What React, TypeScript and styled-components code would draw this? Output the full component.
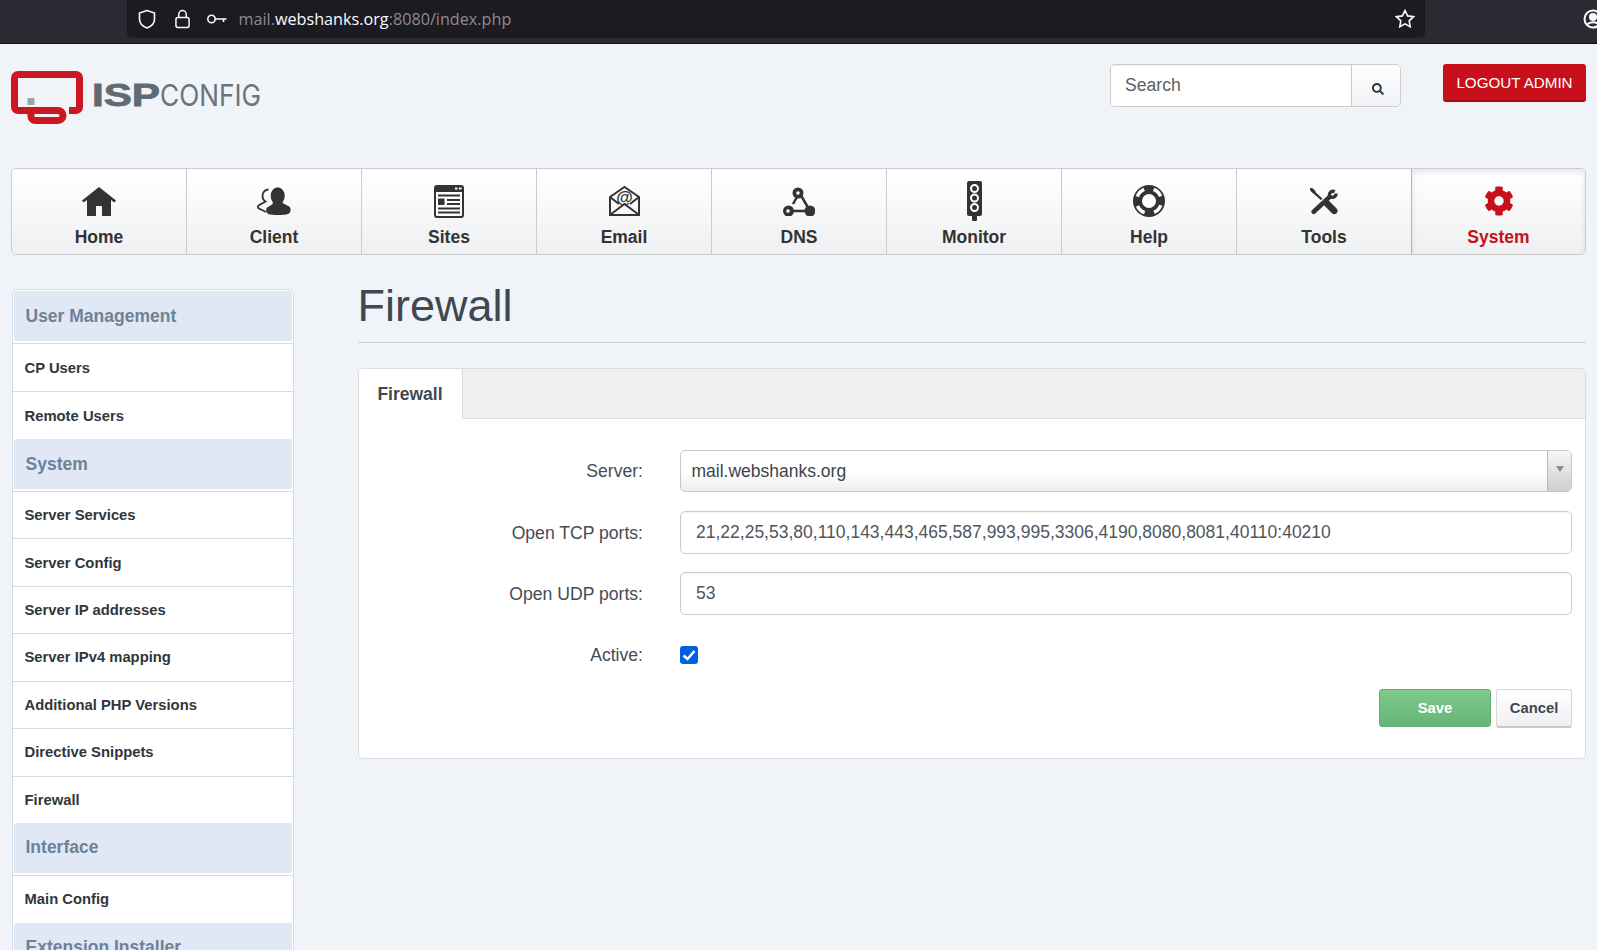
import styled, { createGlobalStyle } from 'styled-components';
import { FaCog, FaSearch } from 'react-icons/fa';

const GlobalStyle = createGlobalStyle`
  html, body {
    margin: 0;
    height: 950px;
    overflow: hidden;
    background: #f0f4f8;
    font-family: "Liberation Sans", Arial, sans-serif;
    color: #3b434b;
  }
  * { box-sizing: border-box; }
`;

const TopBar = styled.div`
  display: flex;
  height: 44px;
  background: #2b2a33;
  border-bottom: 1px solid #0b0b0e;
  padding-left: 127px;
  overflow: hidden;
`;

const UrlBox = styled.div`
  display: flex;
  flex: none;
  align-items: center;
  width: 1298px;
  height: 38px;
  padding: 0 10px 0 10px;
  background: #1c1b22;
  border-radius: 0 0 5px 5px;
`;

const UrlIcon = styled.svg`
  flex: none;
  margin-right: 17.5px;
  fill: none;
  stroke: #fbfbfe;
  stroke-width: 1.6;
`;

const UrlText = styled.span`
  margin-left: -6px;
  flex: 1;
  font-family: "Open Sans", sans-serif;
  font-size: 16.2px;
  color: #8c8c91;
`;

const UrlHost = styled.span`
  color: #fbfbfe;
`;

const StarIcon = styled.svg`
  flex: none;
  fill: none;
  stroke: #fbfbfe;
  stroke-width: 1.6;
`;

const ProfileIcon = styled.svg`
  flex: none;
  margin: 9px 0 0 158px;
  fill: none;
  stroke: #fbfbfe;
  stroke-width: 2;
`;

const Header = styled.header`
  display: flex;
  justify-content: space-between;
  align-items: flex-start;
  height: 124px;
  padding: 20px 11px 0;
`;

const LogoBox = styled.div`
  margin-top: 7px;

  svg {
    display: block;
  }
`;

const HeaderRight = styled.div`
  display: flex;
  align-items: flex-start;
  gap: 42px;
`;

const SearchGroup = styled.div`
  display: flex;
  width: 291px;
  height: 43px;
  border: 1px solid #cccccc;
  border-radius: 5px;
  overflow: hidden;
`;

const SearchInput = styled.input`
  flex: 1;
  min-width: 0;
  border: 0;
  outline: 0;
  padding: 0 14px;
  font: 17.6px "Liberation Sans", Arial, sans-serif;
  color: #555;
  background: #fff;
  box-shadow: inset 0 1px 1px rgba(0, 0, 0, 0.07);

  &::placeholder {
    color: #5a5f65;
    opacity: 1;
  }
`;

const SearchButton = styled.button`
  display: flex;
  align-items: center;
  justify-content: center;
  width: 49px;
  padding: 6px 0 0 3px;
  border: 0;
  border-left: 1px solid #cccccc;
  background: linear-gradient(#ffffff, #f0f1f3);
  color: #2c3640;
  font-size: 12px;
`;

const LogoutButton = styled.button`
  width: 143px;
  height: 38px;
  padding: 1px 0 0;
  border: 0;
  border-bottom: 2px solid #a50d15;
  border-radius: 3px;
  background: #c8101a;
  color: #fff;
  font: 15.2px "Liberation Sans", Arial, sans-serif;
`;

const Nav = styled.nav`
  display: grid;
  grid-template-columns: 174px repeat(7, 175px) 174px;
  height: 87px;
  margin: 0 11px;
  border: 1px solid #cccccc;
  border-radius: 5px;
  overflow: hidden;
`;

const NavItem = styled.div<{ $active?: boolean }>`
  display: flex;
  flex-direction: column;
  align-items: center;
  padding-top: 11px;
  color: ${({ $active }) => ($active ? '#c8101a' : '#333333')};
  background: linear-gradient(#ffffff, #eff0f2);
  border-left: 1px solid ${({ $active }) => ($active ? '#b5b5b5' : '#cccccc')};
  box-shadow: ${({ $active }) => ($active ? 'inset 0 3px 6px rgba(0, 0, 0, 0.1)' : 'none')};

  &:first-child {
    border-left: 0;
  }
`;

const NavIconBox = styled.div`
  display: flex;
  align-items: center;
  justify-content: center;
  height: 42px;
`;

const NavLabel = styled.div`
  font-size: 17.5px;
  font-weight: 700;
  line-height: 30px;
`;

const Main = styled.main`
  display: grid;
  grid-template-columns: 282px 1fr;
  gap: 64px;
  padding: 0 11px 0 11.5px;
`;

const Sidebar = styled.aside`
  margin-top: 34px;
  padding-top: 1px;
  border: 1px solid #cfdce9;
  border-bottom: 0;
  border-radius: 5px 5px 0 0;
  background: #fff;
`;

const SectionHead = styled.div`
  display: flex;
  align-items: center;
  height: 50px;
  margin: 0 1px 2px;
  padding-left: 12px;
  background: #dfe8f4;
  border-radius: 2px;
  color: #6d8299;
  font-size: 17.5px;
  font-weight: 700;
`;

const SideItem = styled.div<{ $height: number }>`
  display: flex;
  align-items: center;
  height: ${({ $height }) => $height}px;
  padding-left: 12px;
  border-top: 1px solid #cfdce9;
  color: #30363c;
  font-size: 14.8px;
  font-weight: 700;
`;

const Content = styled.section`
  padding-top: 24px;
`;

const Title = styled.h1`
  margin: 0 0 25px;
  padding-bottom: 9px;
  border-bottom: 1px solid #d0d2d4;
  font-size: 45px;
  font-weight: 400;
  line-height: 54px;
  color: #3f4850;
`;

const Panel = styled.div`
  height: 391px;
  background: #fff;
  border: 1px solid #dadcde;
  border-radius: 5px;
  overflow: hidden;
`;

const TabStrip = styled.div`
  display: flex;
  height: 50px;
  background: #eeeff1;
  border-bottom: 1px solid #dcdee0;
`;

const Tab = styled.div`
  display: flex;
  align-items: center;
  justify-content: center;
  width: 104px;
  height: 50px;
  background: #fff;
  border-right: 1px solid #dcdee0;
  color: #3f4850;
  font-size: 17.5px;
  font-weight: 700;
`;

const Form = styled.form`
  display: flex;
  flex-direction: column;
  padding: 31px 13px 0 0;
`;

const Row = styled.div<{ $mb: number }>`
  display: grid;
  grid-template-columns: 284.5px 1fr;
  column-gap: 37px;
  align-items: center;
  margin-bottom: ${({ $mb }) => $mb}px;
`;

const Label = styled.label`
  padding-top: 1px;
  text-align: right;
  font-size: 17.6px;
  color: #454c54;
`;

const SelectBox = styled.div`
  display: flex;
  align-items: stretch;
  height: 42px;
  border: 1px solid #c8c8c8;
  border-radius: 5px;
  background: linear-gradient(#ffffff 55%, #ececec);
  overflow: hidden;
`;

const SelectValue = styled.span`
  flex: 1;
  padding-left: 10.5px;
  line-height: 41px;
  font-size: 17.5px;
  color: #3d444b;
`;

const SelectArrow = styled.span`
  display: flex;
  align-items: center;
  justify-content: center;
  width: 24px;
  padding-bottom: 4px;
  border-left: 1px solid #b8b8b8;
  background: linear-gradient(#f6f6f6, #cfcfcf);

  &::after {
    content: '';
    border-left: 4px solid transparent;
    border-right: 4px solid transparent;
    border-top: 6px solid #8a8a8a;
  }
`;

const TextInput = styled.input`
  width: 100%;
  height: 43px;
  padding: 0 15px;
  border: 1px solid #cccccc;
  border-radius: 5px;
  outline: 0;
  font: 17.5px "Liberation Sans", Arial, sans-serif;
  color: #50565c;
  background: #fff;
  box-shadow: inset 0 1px 1px rgba(0, 0, 0, 0.05);
`;

const CheckBox = styled.span`
  display: flex;
  align-items: center;
  justify-content: center;
  width: 18px;
  height: 18px;
  border-radius: 3px;
  background: #0060df;
`;

const Actions = styled.div`
  display: flex;
  justify-content: flex-end;
  gap: 5px;
`;

const SaveButton = styled.button`
  width: 112px;
  height: 38px;
  border: 1px solid #65ad75;
  border-radius: 3px;
  background: linear-gradient(#7ccb8a, #66b577);
  color: #fff;
  font: 700 14.8px "Liberation Sans", Arial, sans-serif;
`;

const CancelButton = styled.button`
  width: 76px;
  height: 39px;
  border: 1px solid #d8d8d8;
  border-bottom: 2px solid #c8c8c8;
  border-radius: 3px;
  background: linear-gradient(#ffffff, #eff0f2);
  color: #3f4850;
  font: 700 14.8px "Liberation Sans", Arial, sans-serif;
`;

const dark = '#333333';

const HomeIcon = () => (
  <svg width="34" height="29" viewBox="0 0 34 29" aria-hidden>
    <path fill={dark} d="M17 0 34 13.5l-1.5 2L29 13v16H20V19h-6v10H5V13l-3.5 2.5L0 13.5z" />
  </svg>
);

const ClientIcon = () => (
  <svg width="34" height="29" viewBox="0 0 34 29" aria-hidden>
    <path
      fill="none"
      stroke={dark}
      strokeWidth="1.8"
      d="M11.500 2.500C8 2.500 5.500 5.500 5.500 9c0 2.500 1.300 4.500 3 5.500L1.500 18.500c-.8.8-.8 2 0 2.800L9 25"
    />
    <ellipse cx="20.700" cy="9" rx="7" ry="8.800" fill={dark} />
    <path
      fill={dark}
      d="M16 15.500h9.500c1 2 7.500 3 8 6 .4 2.500-.5 4-1.500 5-3 2-19 2-21.500 0-1-1-2-3-1-5 1-2 6.500-3.500 6.500-6z"
    />
  </svg>
);

const SitesIcon = () => (
  <svg width="30" height="33" viewBox="0 0 30 33" aria-hidden>
    <rect x="1" y="1" width="28" height="31" rx="2" fill="#fff" stroke={dark} strokeWidth="2" />
    <rect x="1" y="1" width="28" height="6" fill={dark} />
    <rect x="21" y="2.500" width="2.500" height="2" fill="#fff" />
    <rect x="25" y="2.500" width="2.500" height="2" fill="#fff" />
    <path
      stroke={dark}
      strokeWidth="2"
      d="M4 10.500h22M13 15h13M13 19h13M4 23.500h22M4 27.500h22"
    />
    <rect x="4" y="13.500" width="6.500" height="6.500" fill={dark} />
  </svg>
);

const EmailIcon = () => (
  <svg width="31" height="30" viewBox="0 0 31 30" aria-hidden>
    <path
      fill="none"
      stroke={dark}
      strokeWidth="2"
      d="M1 11 15.500 1 30 11v18H1zM1 11l9 7M30 11l-9 7M1.500 28.500 15.500 18l14 10.500"
    />
    <text
      x="15.500"
      y="17"
      fontSize="17"
      fontWeight="700"
      fill={dark}
      textAnchor="middle"
      fontFamily="Liberation Sans"
    >
      @
    </text>
  </svg>
);

const DnsIcon = () => (
  <svg width="32" height="29" viewBox="0 0 32 29" aria-hidden>
    <path stroke={dark} strokeWidth="2.500" d="M16 5 27 24M6 24h21M14 10l-4 7" />
    <circle cx="15" cy="6" r="5.500" fill={dark} />
    <circle cx="5.500" cy="24" r="5.500" fill={dark} />
    <circle cx="27" cy="24" r="5.500" fill={dark} />
    <circle cx="15" cy="6" r="1.800" fill="#fff" />
    <circle cx="5" cy="24" r="1.800" fill="#fff" />
  </svg>
);

const MonitorIcon = () => (
  <svg width="15" height="40" viewBox="0 0 15 40" aria-hidden>
    <rect width="15" height="35" rx="2" fill={dark} />
    <rect x="5" y="34" width="5" height="6" rx="1" fill={dark} />
    <g fill="none" stroke="#fff" strokeWidth="2">
      <circle cx="7.500" cy="7.500" r="3.500" />
      <circle cx="7.500" cy="17" r="3.500" />
      <circle cx="7.500" cy="26.500" r="3.500" />
    </g>
  </svg>
);

const HelpIcon = () => (
  <svg width="32" height="32" viewBox="0 0 32 32" aria-hidden>
    <circle cx="16" cy="16" r="16" fill={dark} />
    <circle cx="16" cy="16" r="7" fill="#fff" />
    <circle cx="16" cy="16" r="9" fill="none" stroke={dark} strokeWidth="3" />
    <circle
      cx="16"
      cy="16"
      r="12.500"
      fill="none"
      stroke="#fff"
      strokeWidth="3.500"
      strokeDasharray="10 9.630"
      transform="rotate(20 16 16)"
    />
  </svg>
);

const ToolsIcon = () => (
  <svg width="28" height="27" viewBox="0 0 30 28" aria-hidden>
    <path stroke={dark} strokeWidth="2.500" strokeLinecap="round" d="M2 2 15 14" />
    <path stroke={dark} strokeWidth="3.500" strokeLinecap="round" d="M1.500 1 4 3.500" />
    <path stroke="#fff" strokeWidth="8" d="M21 9 12 18" />
    <path stroke={dark} strokeWidth="5" strokeLinecap="round" d="M21 9 4 25" />
    <path
      fill="none"
      stroke={dark}
      strokeWidth="3.500"
      d="M26.500 3.500c-3-1.500-6.500 1-5.500 5 3 2.500 7 .5 7-3"
    />
    <path stroke="#fff" strokeWidth="2" d="M14 13 18 17" />
    <path stroke={dark} strokeWidth="7" strokeLinecap="round" d="M17 15 26 24" />
  </svg>
);

const Logo = () => (
  <svg width="256" height="54" viewBox="0 0 256 54" aria-label="ISPConfig">
    <path
      fill="none"
      stroke="#cb1720"
      strokeWidth="7"
      d="M58 39.500h7a3.500 3.500 0 0 0 3.500-3.500V7A3.500 3.500 0 0 0 65 3.500H7A3.500 3.500 0 0 0 3.500 7v29A3.500 3.500 0 0 0 7 39.500h40a5 5 0 0 1 0 10H24a4 4 0 0 1-4-4v-4"
    />
    <rect x="16.500" y="27" width="7" height="7" fill="#9aa5ac" />
    <text
      x="81"
      y="35"
      fontFamily="Liberation Sans"
      fontWeight="700"
      fontSize="31"
      fill="#5f6a72"
      stroke="#5f6a72"
      strokeWidth="0.800"
      textLength="68"
      lengthAdjust="spacingAndGlyphs"
    >
      ISP
    </text>
    <text
      x="149"
      y="35"
      fontFamily="Inter, Liberation Sans"
      fontWeight="400"
      fontSize="30"
      fill="#6a747c"
      textLength="101"
      lengthAdjust="spacingAndGlyphs"
    >
      CONFIG
    </text>
  </svg>
);

const navItems = [
  { label: 'Home', icon: <HomeIcon /> },
  { label: 'Client', icon: <ClientIcon /> },
  { label: 'Sites', icon: <SitesIcon /> },
  { label: 'Email', icon: <EmailIcon /> },
  { label: 'DNS', icon: <DnsIcon /> },
  { label: 'Monitor', icon: <MonitorIcon /> },
  { label: 'Help', icon: <HelpIcon /> },
  { label: 'Tools', icon: <ToolsIcon /> },
  { label: 'System', icon: <FaCog size={30} color="#c8101a" />, active: true },
];

const sections = [
  { title: 'User Management', rowHeight: 48, items: ['CP Users', 'Remote Users'] },
  {
    title: 'System',
    rowHeight: 47.43,
    items: [
      'Server Services',
      'Server Config',
      'Server IP addresses',
      'Server IPv4 mapping',
      'Additional PHP Versions',
      'Directive Snippets',
      'Firewall',
    ],
  },
  { title: 'Interface', rowHeight: 48, items: ['Main Config'] },
  { title: 'Extension Installer', rowHeight: 48, items: [] },
];

const App = () => {
  return (
    <>
      <GlobalStyle />

      <TopBar>
        <UrlBox>
          <UrlIcon width="20" height="20" viewBox="0 0 20 20">
            <path d="M10 1.500 2.500 4v6c0 4.500 3.500 7.500 7.500 9 4-1.500 7.500-4.500 7.500-9V4z" />
          </UrlIcon>
          <UrlIcon width="15" height="20" viewBox="0 0 16 20">
            <rect x="1" y="8.500" width="14" height="10.500" rx="2" />
            <path d="M4 8.500V5a4 4 0 0 1 8 0v3.500" />
          </UrlIcon>
          <UrlIcon width="20" height="10" viewBox="0 0 20 10">
            <circle cx="4.500" cy="5" r="3.700" />
            <path d="M8 5h11.500M16.500 5v3" />
          </UrlIcon>
          <UrlText>
            mail.<UrlHost>webshanks.org</UrlHost>:8080/index.php
          </UrlText>
          <StarIcon width="20" height="20" viewBox="0 0 20 20">
            <path d="m10 1.500 2.600 5.400 5.900.8-4.300 4.100 1 5.900-5.200-2.800-5.200 2.800 1-5.900L1.500 7.700l5.900-.8z" />
          </StarIcon>
        </UrlBox>
        <ProfileIcon width="20" height="20" viewBox="0 0 20 20">
          <circle cx="10" cy="10" r="8.500" />
          <circle cx="10" cy="8" r="3" fill="#fbfbfe" />
          <path d="M4 15.500c3-3 9-3 12 0" />
        </ProfileIcon>
      </TopBar>

      <Header>
        <LogoBox>
          <Logo />
        </LogoBox>
        <HeaderRight>
          <SearchGroup>
            <SearchInput placeholder="Search" />
            <SearchButton type="button">
              <FaSearch />
            </SearchButton>
          </SearchGroup>
          <LogoutButton type="button">LOGOUT ADMIN</LogoutButton>
        </HeaderRight>
      </Header>

      <Nav>
        {navItems.map((item) => (
          <NavItem key={item.label} $active={item.active}>
            <NavIconBox>{item.icon}</NavIconBox>
            <NavLabel>{item.label}</NavLabel>
          </NavItem>
        ))}
      </Nav>

      <Main>
        <Sidebar>
          {sections.map((section) => (
            <div key={section.title}>
              <SectionHead>{section.title}</SectionHead>
              {section.items.map((name) => (
                <SideItem key={name} $height={section.rowHeight}>
                  {name}
                </SideItem>
              ))}
            </div>
          ))}
        </Sidebar>

        <Content>
          <Title>Firewall</Title>
          <Panel>
            <TabStrip>
              <Tab>Firewall</Tab>
            </TabStrip>
            <Form>
              <Row $mb={19}>
                <Label>Server:</Label>
                <SelectBox>
                  <SelectValue>mail.webshanks.org</SelectValue>
                  <SelectArrow />
                </SelectBox>
              </Row>
              <Row $mb={18}>
                <Label>Open TCP ports:</Label>
                <TextInput
                  readOnly
                  value="21,22,25,53,80,110,143,443,465,587,993,995,3306,4190,8080,8081,40110:40210"
                />
              </Row>
              <Row $mb={29}>
                <Label>Open UDP ports:</Label>
                <TextInput readOnly value="53" />
              </Row>
              <Row $mb={23}>
                <Label>Active:</Label>
                <CheckBox>
                  <svg width="14" height="12" viewBox="0 0 14 12" aria-hidden>
                    <path d="M1.500 6.500 5.500 10 12.500 2" fill="none" stroke="#fff" strokeWidth="2.600" />
                  </svg>
                </CheckBox>
              </Row>
              <Actions>
                <SaveButton type="button">Save</SaveButton>
                <CancelButton type="button">Cancel</CancelButton>
              </Actions>
            </Form>
          </Panel>
        </Content>
      </Main>
    </>
  );
};

export default App;
